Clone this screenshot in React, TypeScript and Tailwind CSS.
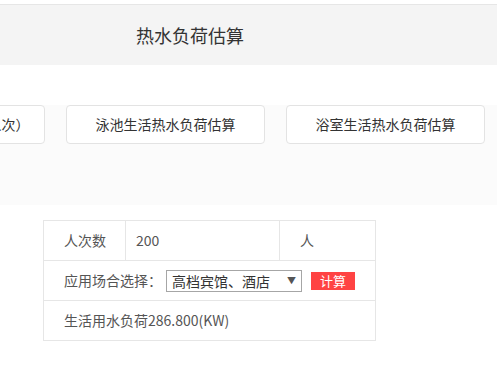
const font = "font-['Microsoft_YaHei','Noto_Sans_CJK_SC',sans-serif]";

const tabs = ["生活热水负荷估算（人次）", "泳池生活热水负荷估算", "浴室生活热水负荷估算"];

export default function App() {
  return (
    <div className={`min-h-[380px] w-full overflow-hidden bg-white ${font}`}>
      {/* header */}
      <div className="pt-[4px]">
        <div className="h-[61px] border-t border-[#e6e6e6] bg-[#f4f4f4] pl-[136px] leading-[60px] text-[18px] text-[#333]">
          热水负荷估算
        </div>
      </div>

      {/* calculator switch */}
      <div className="mt-[40px] h-[100px] bg-[#fbfbfb]">
        <div className="ml-[-154px] flex gap-[21px]">
          {tabs.map((t) => (
            <div
              key={t}
              className="h-[39px] w-[199px] shrink-0 rounded-[4px] border border-[#e3e3e3] bg-white text-center text-[14px] leading-[37px] text-[#333]"
            >
              {t}
            </div>
          ))}
        </div>
      </div>

      {/* form */}
      <div className="ml-[43px] mt-[15px] w-[333px] border border-[#e6e6e6] text-[14px] text-[#555]">
        <div className="flex h-[40px] border-b border-[#e6e6e6]">
          <div className="flex w-[82px] items-center border-r border-[#e6e6e6] pl-[20px]">人次数</div>
          <div className="flex w-[154px] items-center border-r border-[#e6e6e6] pl-[10px]">200</div>
          <div className="flex flex-1 items-center pl-[20px]">人</div>
        </div>
        <div className="flex h-[40px] items-center border-b border-[#e6e6e6] pl-[20px]">
          <span>应用场合选择：</span>
          <div className="relative ml-[4px] h-[22px] w-[136px] border border-[#a6a6a6] bg-white pl-[5px] leading-[20px] text-[#333]">
            高档宾馆、酒店
            <span className="absolute right-[5px] top-0 text-[9px] leading-[20px] text-[#555]">▼</span>
          </div>
          <button className="ml-[9px] h-[18px] w-[44px] bg-[#ff4343] text-[13px] leading-[18px] text-white">计算</button>
        </div>
        <div className="flex h-[39px] items-center pl-[20px]">生活用水负荷286.800(KW)</div>
      </div>
    </div>
  );
}
